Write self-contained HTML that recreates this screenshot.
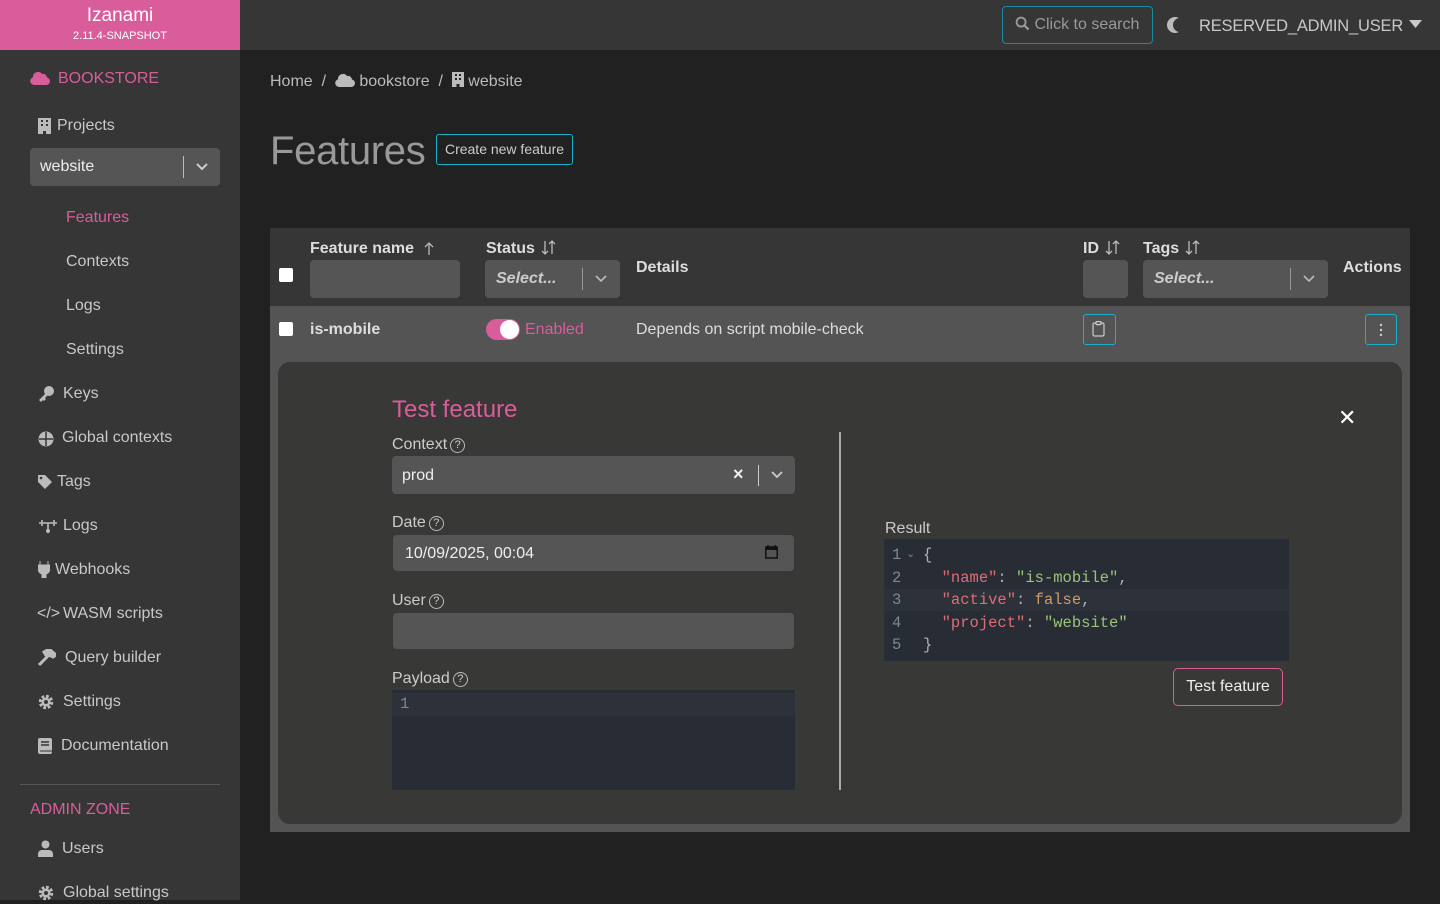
<!DOCTYPE html>
<html><head><meta charset="utf-8"><style>
*{box-sizing:border-box;margin:0;padding:0}
body{width:1440px;height:900px;overflow:hidden;background:#212121;font-family:"Liberation Sans",sans-serif;color:#ccc;position:relative;line-height:1.35}
.a{position:absolute}
.side{left:0;top:0;width:240px;height:900px;background:#363636}
.logo{left:0;top:0;width:240px;height:50px;background:#d95d9b;color:#fff;text-align:center;line-height:1.15}
.top{left:240px;top:0;width:1200px;height:50px;background:#363636}
.nav{font-size:16px;color:#c8c8c8}
.pink{color:#d95d9b}
.sel{background:#555;border-radius:4px}
.mono{font-family:"Liberation Mono",monospace;font-size:15.5px}
.q{display:inline-block;width:15px;height:15px;border:1px solid #bbb;border-radius:50%;font-size:11px;text-align:center;line-height:13px;vertical-align:1px;margin-left:3px}
.cb{width:14px;height:14px;background:#fff;border-radius:2px}
.srt{display:inline-block;vertical-align:-2px;margin-left:6px}
</style></head><body>
<div class="a side"></div>
<div class="a logo"><div style="font-size:19px;padding-top:5px">Izanami</div><div style="font-size:11px;margin-top:3px">2.11.4-SNAPSHOT</div></div>
<div class="a top"></div>
<div class="a" style="left:1002px;top:6px;width:151px;height:38px;border:1px solid #1a8a9e;border-radius:4px;color:#999;font-size:16px;line-height:36px;padding-left:12px">
<svg width="15" height="15" viewBox="0 0 16 16" style="vertical-align:-2px"><circle cx="6.5" cy="6.5" r="4.8" stroke="#999" stroke-width="2" fill="none"/><path d="M10 10l4.5 4.5" stroke="#999" stroke-width="2.4"/></svg> Click to search</div>
<svg class="a" style="left:1166px;top:16px" width="18" height="18" viewBox="0 0 18 18"><circle cx="9" cy="9" r="8" fill="#bbb"/><circle cx="14" cy="9" r="7" fill="#363636"/></svg>
<div class="a" style="left:1199px;top:15px;font-size:16.5px;color:#c8c8c8;letter-spacing:-0.2px">RESERVED_ADMIN_USER</div>
<svg class="a" style="left:1409px;top:20px" width="13" height="9"><path d="M0 0h13L6.5 8z" fill="#c8c8c8"/></svg>

<svg class="a" style="left:30px;top:71px" width="20" height="14" viewBox="0 0 20 14"><path d="M4 14a4 4 0 0 1-1-7.8A5 5 0 0 1 12 3a4 4 0 0 1 5 3.5A3.8 3.8 0 0 1 16 14z" fill="#d95d9b"/></svg>
<div class="a pink" style="left:58px;top:68px;font-size:16px">BOOKSTORE</div>
<svg class="a" style="left:38px;top:118px" width="13" height="16"><path d="M0 0h13v16H8v-3H5v3H0z" fill="#bbb"/><g fill="#363636"><rect x="3" y="2" width="2" height="2"/><rect x="8" y="2" width="2" height="2"/><rect x="3" y="6" width="2" height="2"/><rect x="8" y="6" width="2" height="2"/></g></svg>
<div class="a nav" style="left:57px;top:115px">Projects</div>
<div class="a sel" style="left:30px;top:148px;width:190px;height:38px"></div>
<div class="a" style="left:40px;top:156px;font-size:16px;color:#eee">website</div>
<div class="a" style="left:183px;top:156px;width:1px;height:22px;background:#bbb"></div>
<svg class="a" style="left:196px;top:163px" width="12" height="8"><path d="M1 1l5 5 5-5" stroke="#ccc" stroke-width="2" fill="none"/></svg>
<div class="a pink" style="left:66px;top:207px;font-size:16px">Features</div>
<div class="a nav" style="left:66px;top:251px">Contexts</div>
<div class="a nav" style="left:66px;top:295px">Logs</div>
<div class="a nav" style="left:66px;top:339px">Settings</div>
<svg class="a" style="left:38px;top:386px" width="17" height="16"><circle cx="11" cy="5" r="5" fill="#bbb"/><path d="M8 7L1 14l2 2 2-2 1 1 2-2-1-1 3-3z" fill="#bbb"/></svg>
<div class="a nav" style="left:63px;top:383px">Keys</div>
<svg class="a" style="left:38px;top:431px" width="16" height="16"><circle cx="8" cy="8" r="7.5" fill="#bbb"/><path d="M1 8h14M8 1v14" stroke="#363636" stroke-width="1.5"/></svg>
<div class="a nav" style="left:62px;top:427px">Global contexts</div>
<svg class="a" style="left:38px;top:475px" width="14" height="14"><path d="M0 0h7l7 7-7 7L0 7z" fill="#bbb"/><circle cx="3" cy="3" r="1.3" fill="#363636"/></svg>
<div class="a nav" style="left:57px;top:471px">Tags</div>
<svg class="a" style="left:38px;top:518px" width="20" height="16"><path d="M1 5h18M4 2v6M16 2v6M10 5v7" stroke="#bbb" stroke-width="1.6" fill="none"/><circle cx="10" cy="13" r="2" fill="#bbb"/></svg>
<div class="a nav" style="left:63px;top:515px">Logs</div>
<svg class="a" style="left:38px;top:561px" width="12" height="17"><path d="M2 0v4M10 0v4M0 4h12v4a6 6 0 0 1-4 5v4H4v-4A6 6 0 0 1 0 8z" fill="#bbb" stroke="#bbb"/></svg>
<div class="a nav" style="left:55px;top:559px">Webhooks</div>
<div class="a nav" style="left:37px;top:603px">&lt;/&gt;</div>
<div class="a nav" style="left:63px;top:603px">WASM scripts</div>
<svg class="a" style="left:38px;top:649px" width="18" height="17"><path d="M1 16l9-9M6 3l5-3 7 6-3 2-4-2-2 2z" stroke="#bbb" stroke-width="3" fill="#bbb"/></svg>
<div class="a nav" style="left:65px;top:647px">Query builder</div>
<svg class="a" style="left:38px;top:694px" width="16" height="16"><circle cx="8" cy="8" r="5.5" fill="none" stroke="#bbb" stroke-width="3.5" stroke-dasharray="2.6 1.7"/><circle cx="8" cy="8" r="4.5" fill="#bbb"/><circle cx="8" cy="8" r="2" fill="#363636"/></svg>
<div class="a nav" style="left:63px;top:691px">Settings</div>
<svg class="a" style="left:38px;top:738px" width="14" height="16"><rect width="14" height="16" rx="2" fill="#bbb"/><path d="M3 4h8M3 7h8" stroke="#363636" stroke-width="1.5"/><path d="M2 13h12" stroke="#363636"/></svg>
<div class="a nav" style="left:61px;top:735px">Documentation</div>
<div class="a" style="left:20px;top:784px;width:200px;height:1px;background:#555"></div>
<div class="a pink" style="left:30px;top:799px;font-size:16px">ADMIN ZONE</div>
<svg class="a" style="left:38px;top:840px" width="15" height="17"><circle cx="7.5" cy="4.5" r="4" fill="#bbb"/><path d="M0 17v-3a4 4 0 0 1 4-4h7a4 4 0 0 1 4 4v3z" fill="#bbb"/></svg>
<div class="a nav" style="left:62px;top:838px">Users</div>
<svg class="a" style="left:38px;top:885px" width="16" height="16"><circle cx="8" cy="8" r="5.5" fill="none" stroke="#bbb" stroke-width="3.5" stroke-dasharray="2.6 1.7"/><circle cx="8" cy="8" r="4.5" fill="#bbb"/><circle cx="8" cy="8" r="2" fill="#363636"/></svg>
<div class="a nav" style="left:63px;top:882px">Global settings</div>

<div class="a" style="left:270px;top:71px;font-size:16px;color:#bbb">Home&nbsp; / &nbsp;<svg width="20" height="14" viewBox="0 0 20 14" style="vertical-align:-1px"><path d="M4 14a4 4 0 0 1-1-7.8A5 5 0 0 1 12 3a4 4 0 0 1 5 3.5A3.8 3.8 0 0 1 16 14z" fill="#bbb"/></svg> bookstore&nbsp; / &nbsp;<svg width="12" height="15" style="vertical-align:-1px"><path d="M0 0h12v15H7.5v-3h-3v3H0z" fill="#bbb"/><g fill="#212121"><rect x="3" y="2" width="2" height="2"/><rect x="7" y="2" width="2" height="2"/><rect x="3" y="6" width="2" height="2"/><rect x="7" y="6" width="2" height="2"/></g></svg> website</div>
<div class="a" style="left:270px;top:124px;font-size:40px;color:#999;letter-spacing:-0.3px">Features</div>
<div class="a" style="left:436px;top:134px;width:137px;height:31px;border:1px solid #1ab0cc;border-radius:3px;font-size:14px;color:#ccc;text-align:center;line-height:29px">Create new feature</div>

<div class="a" style="left:270px;top:228px;width:1140px;height:78px;background:#363636"></div>
<div class="a cb" style="left:279px;top:268px"></div>
<div class="a" style="left:310px;top:238px;font-size:16px;font-weight:bold;color:#ddd">Feature name <svg class="srt" width="10" height="14"><path d="M5 14V2M1 6l4-4 4 4" stroke="#bbb" stroke-width="1.3" fill="none"/></svg></div>
<div class="a sel" style="left:310px;top:260px;width:150px;height:38px"></div>
<div class="a" style="left:486px;top:238px;font-size:16px;font-weight:bold;color:#ddd">Status<svg class="srt" width="16" height="15"><path d="M4 1v13M1 11l3 3 3-3M11 14V1M8 4l3-3 3 3" stroke="#bbb" stroke-width="1.3" fill="none"/></svg></div>
<div class="a sel" style="left:485px;top:260px;width:135px;height:38px"></div>
<div class="a" style="left:496px;top:268px;font-size:16px;font-weight:bold;font-style:italic;color:#ccc">Select...</div>
<div class="a" style="left:582px;top:268px;width:1px;height:22px;background:#999"></div>
<svg class="a" style="left:595px;top:275px" width="12" height="8"><path d="M1 1l5 5 5-5" stroke="#bbb" stroke-width="1.6" fill="none"/></svg>
<div class="a" style="left:636px;top:257px;font-size:16px;font-weight:bold;color:#ddd">Details</div>
<div class="a" style="left:1083px;top:238px;font-size:16px;font-weight:bold;color:#ddd">ID<svg class="srt" width="16" height="15"><path d="M4 1v13M1 11l3 3 3-3M11 14V1M8 4l3-3 3 3" stroke="#bbb" stroke-width="1.3" fill="none"/></svg></div>
<div class="a sel" style="left:1083px;top:260px;width:45px;height:38px"></div>
<div class="a" style="left:1143px;top:238px;font-size:16px;font-weight:bold;color:#ddd">Tags<svg class="srt" width="16" height="15"><path d="M4 1v13M1 11l3 3 3-3M11 14V1M8 4l3-3 3 3" stroke="#bbb" stroke-width="1.3" fill="none"/></svg></div>
<div class="a sel" style="left:1143px;top:260px;width:185px;height:38px"></div>
<div class="a" style="left:1154px;top:268px;font-size:16px;font-weight:bold;font-style:italic;color:#ccc">Select...</div>
<div class="a" style="left:1290px;top:268px;width:1px;height:22px;background:#999"></div>
<svg class="a" style="left:1303px;top:275px" width="12" height="8"><path d="M1 1l5 5 5-5" stroke="#bbb" stroke-width="1.6" fill="none"/></svg>
<div class="a" style="left:1343px;top:257px;font-size:16px;font-weight:bold;color:#ddd">Actions</div>

<div class="a" style="left:270px;top:306px;width:1140px;height:526px;background:#545454"></div>
<div class="a cb" style="left:279px;top:322px"></div>
<div class="a" style="left:310px;top:319px;font-size:16px;font-weight:bold;color:#ddd">is-mobile</div>
<div class="a" style="left:486px;top:319px;width:34px;height:21px;border-radius:11px;background:#d95d9b"></div>
<div class="a" style="left:500px;top:320px;width:19px;height:19px;border-radius:50%;background:#fff"></div>
<div class="a pink" style="left:525px;top:319px;font-size:16px">Enabled</div>
<div class="a" style="left:636px;top:319px;font-size:16px;color:#ddd">Depends on script mobile-check</div>
<div class="a" style="left:1083px;top:314px;width:33px;height:31px;border:1px solid #1ab0cc;border-radius:3px"></div>
<svg class="a" style="left:1092px;top:321px" width="14" height="16"><rect x="1" y="2" width="11" height="13" rx="1.5" fill="none" stroke="#ccc" stroke-width="1.2"/><rect x="4" y="0.6" width="5" height="3" rx="1" fill="#545454" stroke="#ccc" stroke-width="1.2"/></svg>
<div class="a" style="left:1365px;top:314px;width:32px;height:31px;border:1px solid #1ab0cc;border-radius:3px"></div>
<svg class="a" style="left:1379px;top:323px" width="4" height="14"><circle cx="2" cy="2" r="1.2" fill="#ccc"/><circle cx="2" cy="7" r="1.2" fill="#ccc"/><circle cx="2" cy="12" r="1.2" fill="#ccc"/></svg>

<div class="a" style="left:278px;top:362px;width:1124px;height:462px;background:#383836;border-radius:12px"></div>
<div class="a pink" style="left:392px;top:394px;font-size:24px">Test feature</div>
<div class="a" style="left:1338px;top:403px;font-size:22px;color:#fff">✕</div>
<div class="a" style="left:392px;top:434px;font-size:16px;color:#ccc">Context<span class="q">?</span></div>
<div class="a sel" style="left:392px;top:456px;width:403px;height:38px"></div>
<div class="a" style="left:402px;top:465px;font-size:16px;color:#eee">prod</div>
<div class="a" style="left:733px;top:462px;font-size:18px;color:#eee;font-weight:bold">×</div>
<div class="a" style="left:758px;top:465px;width:1px;height:21px;background:#ccc"></div>
<svg class="a" style="left:771px;top:471px" width="12" height="8"><path d="M1 1l5 5 5-5" stroke="#ccc" stroke-width="1.8" fill="none"/></svg>
<div class="a" style="left:392px;top:512px;font-size:16px;color:#ccc">Date<span class="q">?</span></div>
<div class="a sel" style="left:393px;top:535px;width:401px;height:36px"></div>
<div class="a" style="left:405px;top:543px;font-size:16px;color:#eee">10/09/2025, 00:04</div>
<svg class="a" style="left:765px;top:545px" width="13" height="14"><rect x="0.8" y="2" width="11.4" height="11" fill="none" stroke="#111" stroke-width="1.5"/><rect x="0.8" y="2" width="11.4" height="3" fill="#111"/><path d="M3 0v3M10 0v3" stroke="#111" stroke-width="1.4"/></svg>
<div class="a" style="left:392px;top:590px;font-size:16px;color:#ccc">User<span class="q">?</span></div>
<div class="a sel" style="left:393px;top:613px;width:401px;height:36px"></div>
<div class="a" style="left:392px;top:668px;font-size:16px;color:#ccc">Payload<span class="q">?</span></div>
<div class="a" style="left:392px;top:690px;width:403px;height:100px;background:#282c34"></div>
<div class="a" style="left:392px;top:693px;width:403px;height:23px;background:#2c313a"></div>
<div class="a mono" style="left:400px;top:694px;color:#7d8799">1</div>
<div class="a" style="left:839px;top:432px;width:2px;height:358px;background:#aaa"></div>

<div class="a" style="left:885px;top:518px;font-size:16px;color:#ccc">Result</div>
<div class="a" style="left:884px;top:539px;width:405px;height:122px;background:#282c34"></div>
<div class="a" style="left:884px;top:589px;width:405px;height:22px;background:#2c313a"></div>
<div class="a mono" style="left:892px;top:544px;line-height:22.5px;color:#7d8799;white-space:pre">1
2
3
4
5</div>
<div class="a" style="left:906px;top:547px;font-size:11px;color:#7d8799">⌄</div>
<div class="a mono" style="left:923px;top:544px;line-height:22.5px;color:#abb2bf;white-space:pre">{
  <span style="color:#e06c75">"name"</span>: <span style="color:#98c379">"is-mobile"</span>,
  <span style="color:#e06c75">"active"</span>: <span style="color:#d19a66">false</span>,
  <span style="color:#e06c75">"project"</span>: <span style="color:#98c379">"website"</span>
}</div>
<div class="a" style="left:1173px;top:668px;width:110px;height:38px;border:1px solid #d95d9b;border-radius:5px;text-align:center;line-height:36px;font-size:16px;color:#eee">Test feature</div>
</body></html>
